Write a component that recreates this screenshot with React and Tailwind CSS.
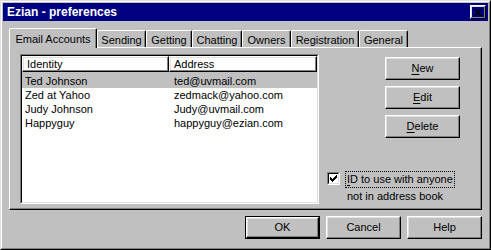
import React from "react";

const raised =
  "border border-t-white border-l-white border-r-black border-b-black shadow-[inset_-1px_-1px_0_#808080,inset_1px_1px_0_#dfdfdf]";

const tabs = [
  { label: "Email Accounts", w: "w-[88px]" },
  { label: "Sending", w: "w-[49px]" },
  { label: "Getting", w: "w-[46px]" },
  { label: "Chatting", w: "w-[50px]" },
  { label: "Owners", w: "w-[49px]" },
  { label: "Registration", w: "w-[68px]" },
  { label: "General", w: "w-[49px]" },
];

const accounts = [
  { name: "Ted Johnson", addr: "ted@uvmail.com", selected: true },
  { name: "Zed at Yahoo", addr: "zedmack@yahoo.com" },
  { name: "Judy Johnson", addr: "Judy@uvmail.com" },
  { name: "Happyguy", addr: "happyguy@ezian.com" },
];

function Button({ children, isDefault }) {
  if (isDefault) {
    return (
      <div className="w-[75px] h-[23px] border border-black">
        <div className={`h-full flex items-center justify-center ${raised}`}>
          {children}
        </div>
      </div>
    );
  }
  return (
    <div className={`w-[75px] h-[23px] flex items-center justify-center ${raised}`}>
      {children}
    </div>
  );
}

function App() {
  return (
    <div className="w-[491px] h-[250px] bg-[#c0c0c0] border border-t-[#dfdfdf] border-l-[#dfdfdf] border-r-black border-b-black font-['Liberation_Sans',Arial,sans-serif] text-[11px] leading-none text-black select-none">
      <div className="h-full border border-t-white border-l-white border-r-[#808080] border-b-[#808080] p-px flex flex-col">
        {/* Title bar */}
        <div className="h-[18px] bg-[#000080] flex items-center justify-between pl-[4px] pr-[2px]">
          <span className="text-white font-bold text-[12px]">Ezian - preferences</span>
          <div className={`w-[16px] h-[14px] flex items-center justify-center ${raised}`}>
            <svg width="8" height="7" viewBox="0 0 8 7">
              <path d="M0 0h2l2 2 2-2h2L5 3.5 8 7H6L4 5 2 7H0l3-3.5z" fill="black" />
            </svg>
          </div>
        </div>

        {/* Tabs */}
        <div className="mt-[7px] px-[6px] flex items-start h-[19px]">
          {tabs.map((t, i) =>
            i === 0 ? (
              <div
                key={t.label}
                className={`${t.w} h-[20px] relative z-10 bg-[#c0c0c0] border-t border-l border-r border-t-white border-l-white border-r-black rounded-t-[2px] shadow-[inset_-1px_0_0_#808080] flex items-start justify-center pt-[5px]`}
              >
                {t.label}
              </div>
            ) : (
              <div
                key={t.label}
                className={`${t.w} h-[17px] mt-[2px] border-t border-l border-r border-t-white border-l-white border-r-black rounded-t-[2px] shadow-[inset_-1px_0_0_#808080] flex items-start justify-center pt-[4px]`}
              >
                {t.label}
              </div>
            )
          )}
        </div>

        {/* Panel */}
        <div className="mx-[6px] h-[163px] border border-t-white border-l-white border-r-black border-b-black shadow-[inset_-1px_-1px_0_#808080] flex pl-[10px] pt-[6px] pb-[5px]">
          {/* List view */}
          <div className="w-[299px] h-[150px] border border-t-[#808080] border-l-[#808080] border-r-white border-b-white">
            <div className="h-full border border-t-black border-l-black border-r-[#dfdfdf] border-b-[#dfdfdf] bg-white">
              <div className="flex h-[16px]">
                <div className={`w-[147px] pl-[4px] flex items-center ${raised}`}>Identity</div>
                <div className={`flex-1 pl-[4px] flex items-center ${raised}`}>Address</div>
              </div>
              <div className="flex flex-col">
                {accounts.map((a, i) => (
                  <div
                    key={a.name}
                    className={`flex items-center ${i === 0 ? "h-[16px] pt-[2px]" : "h-[14px]"} ${a.selected ? "bg-[#c0c0c0]" : ""}`}
                  >
                    <span className="w-[152px] pl-[3px]">{a.name}</span>
                    <span>{a.addr}</span>
                  </div>
                ))}
              </div>
            </div>
          </div>

          {/* Right side */}
          <div className="flex-1 flex flex-col">
            <div className="flex flex-col items-end gap-[6px] pt-[3px] pr-[21px]">
              <Button>
                <span className="underline underline-offset-2">N</span>ew
              </Button>
              <Button>
                <span className="underline underline-offset-2">E</span>dit
              </Button>
              <Button>
                <span className="underline underline-offset-2">D</span>elete
              </Button>
            </div>
            <div className="mt-[33px] pl-[8px] flex items-start gap-[5px]">
              <div className="w-[13px] h-[13px] border border-t-[#808080] border-l-[#808080] border-r-white border-b-white shrink-0 mt-[1px]">
                <div className="w-full h-full bg-white border border-t-black border-l-black border-r-[#dfdfdf] border-b-[#dfdfdf] flex items-center justify-center">
                  <svg width="7" height="7" viewBox="0 0 7 7">
                    <path d="M0 2h1v1h1v1h1V3h1V2h1V1h1V0h1v3H6v1H5v1H4v1H3v1H2V6H1V5H0z" fill="black" />
                  </svg>
                </div>
              </div>
              <div className="flex flex-col">
                <span className="border border-dotted border-black px-[1px] py-[1px] leading-[13px]">
                  <span className="underline underline-offset-2">I</span>D to use with anyone
                </span>
                <span className="px-[2px] mt-[2px] leading-[13px]">not in address book</span>
              </div>
            </div>
          </div>
        </div>

        {/* Bottom buttons */}
        <div className="mt-[6px] pr-[6px] flex justify-end gap-[6px]">
          <Button isDefault>OK</Button>
          <Button>Cancel</Button>
          <Button>Help</Button>
        </div>
      </div>
    </div>
  );
}

export default App;
